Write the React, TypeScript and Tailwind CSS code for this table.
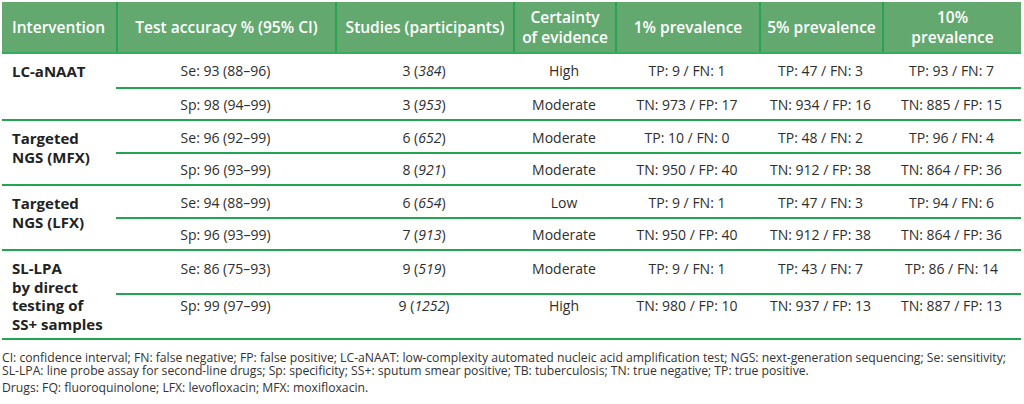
import React from 'react'

type Row = {
    acc: string
    studies: string
    part: string
    cert: string
    p1: string
    p5: string
    p10: string
}

type Group = {
    name: React.ReactNode
    rows: [Row, Row]
    tall?: boolean
}

const groups: Group[] = [
    {
        name: 'LC-aNAAT',
        rows: [
            { acc: 'Se: 93 (88–96)', studies: '3', part: '384', cert: 'High', p1: 'TP: 9 / FN: 1', p5: 'TP: 47 / FN: 3', p10: 'TP: 93 / FN: 7' },
            { acc: 'Sp: 98 (94–99)', studies: '3', part: '953', cert: 'Moderate', p1: 'TN: 973 / FP: 17', p5: 'TN: 934 / FP: 16', p10: 'TN: 885 / FP: 15' },
        ],
    },
    {
        name: <>Targeted<br />NGS (MFX)</>,
        rows: [
            { acc: 'Se: 96 (92–99)', studies: '6', part: '652', cert: 'Moderate', p1: 'TP: 10 / FN: 0', p5: 'TP: 48 / FN: 2', p10: 'TP: 96 / FN: 4' },
            { acc: 'Sp: 96 (93–99)', studies: '8', part: '921', cert: 'Moderate', p1: 'TN: 950 / FP: 40', p5: 'TN: 912 / FP: 38', p10: 'TN: 864 / FP: 36' },
        ],
    },
    {
        name: <>Targeted<br />NGS (LFX)</>,
        rows: [
            { acc: 'Se: 94 (88–99)', studies: '6', part: '654', cert: 'Low', p1: 'TP: 9 / FN: 1', p5: 'TP: 47 / FN: 3', p10: 'TP: 94 / FN: 6' },
            { acc: 'Sp: 96 (93–99)', studies: '7', part: '913', cert: 'Moderate', p1: 'TN: 950 / FP: 40', p5: 'TN: 912 / FP: 38', p10: 'TN: 864 / FP: 36' },
        ],
    },
    {
        name: <>SL-LPA<br />by direct<br />testing of<br />SS+ samples</>,
        tall: true,
        rows: [
            { acc: 'Se: 86 (75–93)', studies: '9', part: '519', cert: 'Moderate', p1: 'TP: 9 / FN: 1', p5: 'TP: 43 / FN: 7', p10: 'TP: 86 / FN: 14' },
            { acc: 'Sp: 99 (97–99)', studies: '9', part: '1252', cert: 'High', p1: 'TN: 980 / FP: 10', p5: 'TN: 937 / FP: 13', p10: 'TN: 887 / FP: 13' },
        ],
    },
]

const cols = 'grid grid-cols-[219px_178px_102px_144px_123px_139px]'

export default function App() {
    return (
        <div className="w-[1024px] h-[404px] bg-white text-[#2e2e2e] font-['Open_Sans',sans-serif] overflow-hidden">
            <div className="ml-[2px] mt-[2px] w-[1019px]">
                {/* header */}
                <div className="grid grid-cols-[114px_219px_178px_102px_144px_123px_139px] h-[52px] bg-[#63a96f] border-b-2 border-[#35ad5e] text-white font-semibold text-[15.5px] leading-[20px]">
                    <div className="flex items-center pl-[10px]">Intervention</div>
                    <HeadCell>Test accuracy % (95% CI)</HeadCell>
                    <HeadCell>Studies (participants)</HeadCell>
                    <HeadCell>Certainty<br />of evidence</HeadCell>
                    <HeadCell>1% prevalence</HeadCell>
                    <HeadCell>5% prevalence</HeadCell>
                    <HeadCell>10%<br />prevalence</HeadCell>
                </div>

                {/* body */}
                {groups.map((g, gi) => (
                    <div key={gi} className="flex border-b-2 border-[#22a550]">
                        <div className="w-[114px] shrink-0 pl-[10px] font-bold text-[15px] leading-[18.7px] text-[#222] pt-[8px]">
                            {g.name}
                        </div>
                        <div className="flex-1">
                            {g.rows.map((r, ri) => (
                                <div
                                    key={ri}
                                    className={`${cols} text-[14px] leading-[19px] text-center ${ri === 1 ? 'border-t-2 border-[#22a550]' : ''} ${
                                        g.tall
                                            ? ri === 0 ? 'h-[42px] pt-[8px]' : 'h-[45px] pt-px'
                                            : ri === 0 ? (gi === 0 ? 'h-[33px] pt-[7px]' : 'h-[31px] pt-[7px]') : 'h-[32px] pt-[6px]'
                                    }`}
                                >
                                    <div>{r.acc}</div>
                                    <div>{r.studies} (<i>{r.part}</i>)</div>
                                    <div>{r.cert}</div>
                                    <div>{r.p1}</div>
                                    <div>{r.p5}</div>
                                    <div>{r.p10}</div>
                                </div>
                            ))}
                        </div>
                    </div>
                ))}
            </div>

            {/* footnotes */}
            <div className="ml-[2px] mt-[11px] text-[12.2px] leading-[13px] text-[#333] whitespace-nowrap">
                <p>
                    CI: confidence interval; FN: false negative; FP: false positive; LC-aNAAT: low-complexity automated nucleic acid amplification test; NGS: next-generation sequencing; Se: sensitivity;
                    <br />
                    SL-LPA: line probe assay for second-line drugs; Sp: specificity; SS+: sputum smear positive; TB: tuberculosis; TN: true negative; TP: true positive.
                </p>
                <p className="mt-[4px]">Drugs: FQ: fluoroquinolone; LFX: levofloxacin; MFX: moxifloxacin.</p>
            </div>
        </div>
    )
}

function HeadCell({ children }: { children: React.ReactNode }) {
    return (
        <div className="flex items-center justify-center text-center border-l-2 border-[#27a351]">
            <span>{children}</span>
        </div>
    )
}
